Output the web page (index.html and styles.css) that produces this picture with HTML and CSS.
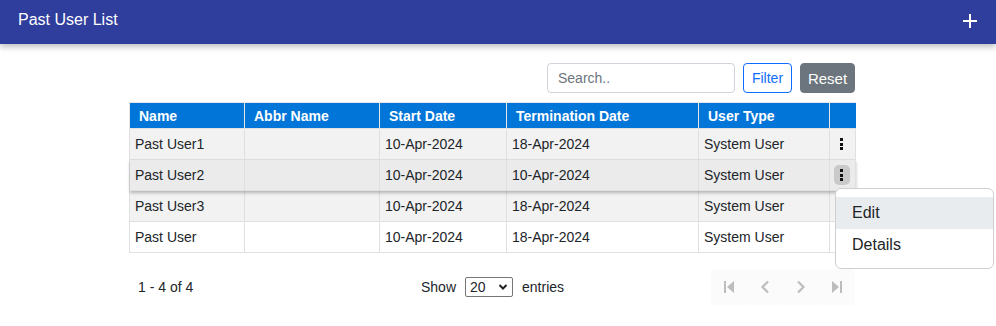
FILE: index.html
```html
<!DOCTYPE html>
<html>
<head>
<meta charset="utf-8">
<link rel="stylesheet" href="styles.css">
</head>
<body>
<header class="topbar">
  <span class="title">Past User List</span>
  <svg class="plus" width="16" height="16" viewBox="0 0 16 16"><path d="M8 1v14M1 8h14" stroke="#fff" stroke-width="2"/></svg>
</header>
<main class="content">
  <div class="toolbar">
    <input class="search" type="text" placeholder="Search..">
    <button class="btn btn-filter">Filter</button>
    <button class="btn btn-reset">Reset</button>
  </div>
  <div class="table-wrap">
    <table class="grid">
      <colgroup>
        <col class="c1"><col class="c2"><col class="c3"><col class="c4"><col class="c5"><col class="c6">
      </colgroup>
      <thead>
        <tr><th>Name</th><th>Abbr Name</th><th>Start Date</th><th>Termination Date</th><th>User Type</th><th></th></tr>
      </thead>
      <tbody>
        <tr class="odd"><td>Past User1</td><td></td><td>10-Apr-2024</td><td>18-Apr-2024</td><td>System User</td><td class="act"><span class="kebab"><i></i><i></i><i></i></span></td></tr>
        <tr class="hover"><td>Past User2</td><td></td><td>10-Apr-2024</td><td>10-Apr-2024</td><td>System User</td><td class="act"><span class="kebab active"><i></i><i></i><i></i></span></td></tr>
        <tr class="odd"><td>Past User3</td><td></td><td>10-Apr-2024</td><td>18-Apr-2024</td><td>System User</td><td class="act"></td></tr>
        <tr><td>Past User</td><td></td><td>10-Apr-2024</td><td>18-Apr-2024</td><td>System User</td><td class="act"></td></tr>
      </tbody>
    </table>
    <div class="menu">
      <div class="menu-item selected">Edit</div>
      <div class="menu-item">Details</div>
    </div>
  </div>
  <div class="footer">
    <span class="count">1 - 4 of 4</span>
    <div class="show">
      <span>Show</span>
      <span class="select">20<svg width="10" height="8" viewBox="0 0 10 8"><path d="M1.5 2l3.5 3.5L8.5 2" stroke="#222" stroke-width="2" fill="none"/></svg></span>
      <span>entries</span>
    </div>
    <div class="pager">
      <span class="pg"><svg width="12" height="14" viewBox="0 0 12 14"><path d="M2 1v12" stroke="#bdbdbd" stroke-width="2"/><path d="M11 1L4 7l7 6z" fill="#bdbdbd"/></svg></span>
      <span class="pg"><svg width="12" height="14" viewBox="0 0 12 14"><path d="M9 1.5L3.5 7 9 12.5" stroke="#bdbdbd" stroke-width="2.2" fill="none"/></svg></span>
      <span class="pg"><svg width="12" height="14" viewBox="0 0 12 14"><path d="M3 1.5L8.5 7 3 12.5" stroke="#bdbdbd" stroke-width="2.2" fill="none"/></svg></span>
      <span class="pg"><svg width="12" height="14" viewBox="0 0 12 14"><path d="M10 1v12" stroke="#bdbdbd" stroke-width="2"/><path d="M1 1l7 6-7 6z" fill="#bdbdbd"/></svg></span>
    </div>
  </div>
</main>
</body>
</html>
```
FILE: styles.css
```css
* { box-sizing: border-box; }
body {
  margin: 0;
  font-family: "Liberation Sans", Arial, sans-serif;
  background: #fff;
  color: #212529;
}
.topbar {
  height: 44px;
  background: #2f3d9d;
  display: flex;
  align-items: center;
  justify-content: space-between;
  padding: 0 18px 0 18px;
  box-shadow: 0 3px 6px rgba(0,0,0,0.25);
  position: relative;
}
.title {
  color: #fff;
  font-size: 16px;
  margin-top: -4px;
}
.plus { margin-top: -3px; }
.content {
  margin-left: 129px;
  width: 726px;
  padding-top: 19px;
}
.toolbar {
  display: flex;
  justify-content: flex-end;
  align-items: center;
  gap: 8px;
  height: 30px;
}
.search {
  width: 188px;
  height: 30px;
  border: 1px solid #ced4da;
  border-radius: 4px;
  padding: 0 10px;
  font-family: inherit;
  font-size: 14px;
  color: #495057;
}
.search::placeholder { color: #6c757d; }
.btn {
  height: 30px;
  border-radius: 4px;
  font-family: inherit;
  font-size: 14px;
  padding: 0 6px;
}
.btn-filter {
  width: 49px;
  background: #fff;
  border: 1px solid #0d6efd;
  color: #0d6efd;
}
.btn-reset {
  width: 55px;
  background: #6c757d;
  border: 1px solid #6c757d;
  color: #fff;
  font-size: 15px;
}
.table-wrap {
  position: relative;
  margin-top: 9px;
}
.grid {
  width: 726px;
  border-collapse: collapse;
  table-layout: fixed;
  font-size: 14px;
}
.c1 { width: 115px; }
.c2 { width: 135px; }
.c3 { width: 127px; }
.c4 { width: 192px; }
.c5 { width: 131px; }
.c6 { width: 26px; }
.grid th {
  background: #0275d8;
  color: #fff;
  font-weight: bold;
  text-align: left;
  height: 26px;
  padding: 1px 9px 0;
  border-left: 1px solid #e6e6e6;
  border-top: 1px solid #e6e6e6;
}
.grid td {
  height: 31px;
  padding: 0 5px;
  border: 1px solid #e0e0e4;
  color: #212529;
}
.grid tr.odd td { background: #f2f2f2; }
.grid tr.hover td { background: #ebebeb; }
.grid tr.hover { box-shadow: 0 2px 3px rgba(0,0,0,0.25); position: relative; }
.grid td.act { padding: 0; text-align: center; }
.kebab {
  display: inline-flex;
  flex-direction: column;
  align-items: center;
  justify-content: center;
  gap: 1.5px;
  width: 16px;
  height: 20px;
  border-radius: 5px;
  vertical-align: middle;
  margin-left: -2px;
}
.kebab i {
  display: block;
  width: 3px;
  height: 3px;
  background: #111;
}
.kebab.active { background: #c9c9c9; }
.menu {
  position: absolute;
  left: 706px;
  top: 86px;
  width: 159px;
  height: 81px;
  background: #fff;
  border: 1px solid #cfcfcf;
  border-radius: 6px;
  padding: 8px 0;
  z-index: 5;
  font-size: 16px;
}
.menu-item {
  height: 32px;
  line-height: 32px;
  padding-left: 16px;
  color: #212529;
}
.menu-item.selected { background: #e9ecef; }
.footer {
  display: flex;
  align-items: center;
  height: 54px;
  margin-top: 7px;
  font-size: 14px;
  position: relative;
}
.count {
  padding-left: 9px;
  width: 292px;
}
.show {
  display: flex;
  align-items: center;
  gap: 9px;
}
.select {
  display: inline-flex;
  align-items: center;
  justify-content: space-between;
  width: 48px;
  height: 20px;
  border: 1px solid #767676;
  border-radius: 2px;
  padding: 0 4px 0 4px;
  font-size: 14px;
}
.pager {
  margin-left: auto;
  display: flex;
  height: 36px;
}
.pg {
  width: 36px;
  height: 36px;
  display: flex;
  align-items: center;
  justify-content: center;
  background: #fbfbfb;
  border-radius: 3px;
}
```
